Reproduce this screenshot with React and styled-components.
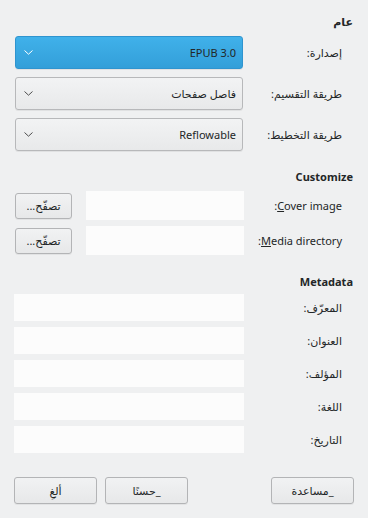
import React from "react";
import styled, { createGlobalStyle } from "styled-components";

const Global = createGlobalStyle`
  html, body { margin: 0; padding: 0; background: #eff0f1; }
  body { font-family: "Noto Sans", "DejaVu Sans", sans-serif; font-size: 11px; color: #232627; }
  * { box-sizing: border-box; }
`;

const Page = styled.div`
  direction: rtl;
  width: 368px;
  height: 518px;
  padding: 15px 0 0 0;
  display: flex;
  flex-direction: column;
`;

const Header = styled.div`
  height: 14px;
  line-height: 14px;
  font-weight: bold;
  padding-right: 15px;
  margin-top: ${(p) => p.$top || 0}px;
  margin-bottom: ${(p) => p.$bottom || 0}px;
`;

const Form = styled.div`
  display: grid;
  grid-template-columns: 98px 230px;
  row-gap: ${(p) => p.$gap}px;
  margin-right: 26px;
  margin-left: 14px;
  align-items: center;
`;

const Label = styled.div`
  text-align: right;
  white-space: nowrap;
  line-height: 14px;
`;

const LtrText = styled.span`
  direction: ltr;
  unicode-bidi: isolate;
`;

const U = styled.span`
  text-decoration: underline;
`;

const Combo = styled.div`
  height: 33px;
  margin: 0 1px;
  border-radius: 3px;
  display: flex;
  align-items: center;
  justify-content: space-between;
  padding: 0 6px 0 8px;
  border: 1px solid ${(p) => (p.$active ? "#2f94cf" : "#b7b8ba")};
  background: ${(p) =>
    p.$active
      ? "linear-gradient(#40b1ea, #339fd9)"
      : "linear-gradient(#f2f3f4, #e8e9ea)"};
  color: #232627;
  box-shadow: 0 1px 0 rgba(0,0,0,0.06);
`;

const ComboText = styled.span`
  line-height: 14px;
`;

const Chevron = ({ color }) => (
  <svg width="9" height="5" viewBox="0 0 9 5" style={{ display: "block" }}>
    <path d="M0.5 0.5 L4.5 4.2 L8.5 0.5" fill="none" stroke={color} strokeWidth="1" />
  </svg>
);

const PathRow = styled.div`
  display: flex;
  align-items: center;
  gap: 14px;
  margin-left: 1px;
`;

const LineEdit = styled.div`
  height: ${(p) => p.$h}px;
  flex: ${(p) => (p.$grow ? 1 : "none")};
  background: #fcfcfc;
`;

const Button = styled.button`
  font-family: "Noto Sans", "DejaVu Sans", sans-serif;
  font-size: 11px;
  color: #232627;
  width: ${(p) => p.$w}px;
  height: ${(p) => p.$h}px;
  flex: none;
  border: 1px solid #b3b4b6;
  border-radius: 3px;
  background: linear-gradient(#f1f2f3, #e7e8e9);
  padding: 0;
  display: flex;
  align-items: center;
  justify-content: center;
  direction: rtl;
  box-shadow: 0 1px 0 rgba(0,0,0,0.05);
`;

const ButtonBar = styled.div`
  display: flex;
  gap: 8px;
  margin-top: 24px;
  padding: 0 14px;
`;

const Spacer = styled.div`
  flex: 1;
`;

export default function App() {
  return (
    <>
      <Global />
      <Page>
        <Header $bottom={7}>عام</Header>
        <Form $gap={8}>
          <Label>إصدارة:</Label>
          <Combo $active>
            <ComboText>EPUB 3.0</ComboText>
            <Chevron color="#ffffff" />
          </Combo>
          <Label>طريقة التقسيم:</Label>
          <Combo>
            <ComboText>فاصل صفحات</ComboText>
            <Chevron color="#4d4d4d" />
          </Combo>
          <Label>طريقة التخطيط:</Label>
          <Combo>
            <ComboText>Reflowable</ComboText>
            <Chevron color="#4d4d4d" />
          </Combo>
        </Form>

        <Header $top={19} $bottom={7}>Customize</Header>
        <Form $gap={6}>
          <Label>
            <LtrText>:<U>C</U>over image</LtrText>
          </Label>
          <PathRow>
            <LineEdit $h={29} $grow />
            <Button $w={57} $h={26}>تصفّح...</Button>
          </PathRow>
          <Label>
            <LtrText>:<U>M</U>edia directory</LtrText>
          </Label>
          <PathRow>
            <LineEdit $h={29} $grow />
            <Button $w={57} $h={26}>تصفّح...</Button>
          </PathRow>
        </Form>

        <Header $top={20} $bottom={5}>Metadata</Header>
        <Form $gap={6}>
          <Label>المعرّف:</Label>
          <LineEdit $h={27} />
          <Label>العنوان:</Label>
          <LineEdit $h={27} />
          <Label>المؤلف:</Label>
          <LineEdit $h={27} />
          <Label>اللغة:</Label>
          <LineEdit $h={27} />
          <Label>التاريخ:</Label>
          <LineEdit $h={27} />
        </Form>

        <ButtonBar>
          <Button $w={83} $h={27}>_مساعدة</Button>
          <Spacer />
          <Button $w={83} $h={27}>_حسنًا</Button>
          <Button $w={83} $h={27}>ألغِ</Button>
        </ButtonBar>
      </Page>
    </>
  );
}
